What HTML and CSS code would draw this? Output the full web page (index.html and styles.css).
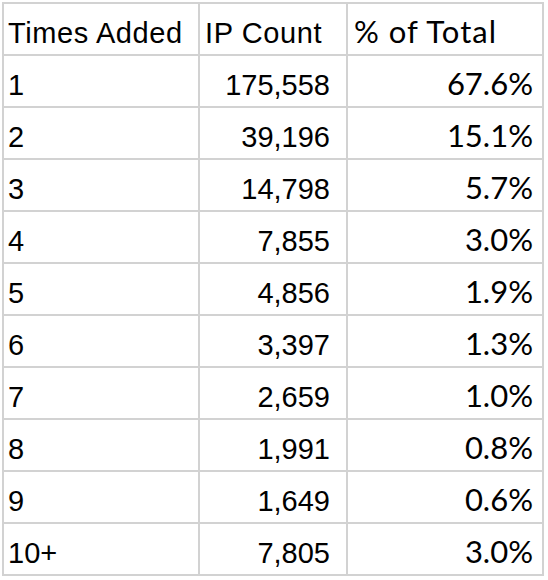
FILE: index.html
```html
<!DOCTYPE html>
<html>
<head>
<meta charset="utf-8">
<link rel="stylesheet" href="styles.css">
</head>
<body>
<div class="sheet">
  <div class="cell c1 head">Times Added</div><div class="cell c2 head">IP Count</div><div class="cell c3 head">% of Total</div>
  <div class="cell c1">1</div><div class="cell c2 num">175,558</div><div class="cell c3 num">67.6%</div>
  <div class="cell c1">2</div><div class="cell c2 num">39,196</div><div class="cell c3 num">15.1%</div>
  <div class="cell c1">3</div><div class="cell c2 num">14,798</div><div class="cell c3 num">5.7%</div>
  <div class="cell c1">4</div><div class="cell c2 num">7,855</div><div class="cell c3 num">3.0%</div>
  <div class="cell c1">5</div><div class="cell c2 num">4,856</div><div class="cell c3 num">1.9%</div>
  <div class="cell c1">6</div><div class="cell c2 num">3,397</div><div class="cell c3 num">1.3%</div>
  <div class="cell c1">7</div><div class="cell c2 num">2,659</div><div class="cell c3 num">1.0%</div>
  <div class="cell c1">8</div><div class="cell c2 num">1,991</div><div class="cell c3 num">0.8%</div>
  <div class="cell c1">9</div><div class="cell c2 num">1,649</div><div class="cell c3 num">0.6%</div>
  <div class="cell c1">10+</div><div class="cell c2 num">7,805</div><div class="cell c3 num">3.0%</div>
</div>
</body>
</html>
```
FILE: styles.css
```css
html, body {
  margin: 0;
  padding: 0;
  background: #ffffff;
}
body {
  padding: 2px 0 0 2px;
}
.sheet {
  display: grid;
  grid-template-columns: 194px 146px 194px;
  grid-auto-rows: 50px;
  gap: 2px;
  padding: 2px;
  background: #d2d2d2;
  width: max-content;
}
.cell {
  background: #ffffff;
  color: #000000;
  display: flex;
  align-items: flex-end;
  white-space: nowrap;
  box-sizing: border-box;
}
.c1, .c2 {
  font-family: "Liberation Sans", Arial, sans-serif;
  font-size: 29px;
  line-height: 29px;
  padding: 0 5px 6px 5px;
}
.c1.head, .c2.head {
  letter-spacing: 0.6px;
}
.c1 {
  padding-left: 4px;
}
.c2.num {
  justify-content: flex-end;
  padding-right: 16px;
}
.c3 {
  font-family: Lato, "Open Sans", sans-serif;
  font-size: 31px;
  line-height: 31px;
  padding: 0 9px 7px 7px;
}
.c3.head {
  letter-spacing: 1px;
  padding-left: 6px;
}
.c3.num {
  justify-content: flex-end;
}
```
